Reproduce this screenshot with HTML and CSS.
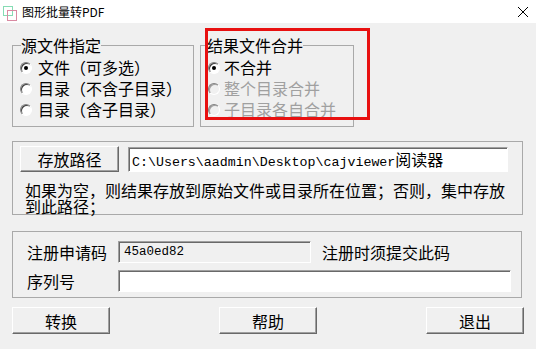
FILE: index.html
```html
<!DOCTYPE html>
<html>
<head>
    <meta charset="utf-8" />
    <title>图形批量转PDF</title>
    <link rel="stylesheet" href="styles.css">
</head>
<body>
    <div class="titlebar">
        <svg class="app-icon" width="16" height="16" viewBox="0 0 16 16">
            <rect x="1.5" y="1.5" width="9" height="9" fill="none" stroke="#86dcb4" stroke-width="1" />
            <rect x="5.5" y="5.5" width="9" height="10" fill="none" stroke="#d98aa2" stroke-width="1" />
        </svg>
        <span class="title">图形批量转PDF</span>
        <svg class="close" width="12" height="12" viewBox="0 0 12 12">
            <path d="M1 1 L11 11 M11 1 L1 11" stroke="#000" stroke-width="1" />
        </svg>
    </div>

    <div class="main">
        <div class="top-row">
            <fieldset class="group source">
                <legend>源文件指定</legend>
                <label class="opt"><input type="radio" name="src" checked> 文件（可多选）</label>
                <label class="opt"><input type="radio" name="src"> 目录（不含子目录）</label>
                <label class="opt"><input type="radio" name="src"> 目录（含子目录）</label>
            </fieldset>
            <fieldset class="group merge">
                <legend>结果文件合并</legend>
                <label class="opt"><input type="radio" name="merge" checked> 不合并</label>
                <label class="opt disabled"><input type="radio" name="merge" disabled> 整个目录合并</label>
                <label class="opt disabled"><input type="radio" name="merge" disabled> 子目录各自合并</label>
            </fieldset>
            <div class="highlight"></div>
        </div>

        <div class="group path-box">
            <div class="path-row">
                <button class="btn btn-path">存放路径</button>
                <div class="edit path-edit">C:\Users\aadmin\Desktop\cajviewer<span class="cjk">阅读器</span></div>
            </div>
            <p class="hint">如果为空，则结果存放到原始文件或目录所在位置；否则，集中存放<br>到此路径；</p>
        </div>

        <div class="group reg-box">
            <div class="reg-row">
                <span class="reg-label">注册申请码</span>
                <div class="edit code-edit">45a0ed82</div>
                <span class="reg-note">注册时须提交此码</span>
            </div>
            <div class="reg-row">
                <span class="reg-label">序列号</span>
                <div class="edit serial-edit"></div>
            </div>
        </div>

        <div class="actions">
            <button class="btn">转换</button>
            <button class="btn">帮助</button>
            <button class="btn">退出</button>
        </div>
    </div>
</body>
</html>
```

FILE: styles.css
```css
body {
	margin: 0;
	background: #f0f0f0;
	font-family: "Noto Sans CJK SC", "Liberation Sans", sans-serif;
	font-size: 16px;
	color: #000;
}

/***************************
	Title bar
***************************/
.titlebar {
	height: 23px;
	background: #fff;
	display: flex;
	align-items: center;
}

.app-icon {
	margin-left: 2px;
	margin-top: 2px;
}

.title {
	margin-left: 4px;
	font-size: 12px;
	line-height: 14px;
}

.close {
	margin-left: auto;
	margin-right: 7px;
}

/***************************
	Main panel
***************************/
.main {
	padding: 13px 12px 0 12px;
}

.top-row {
	display: flex;
	gap: 6px;
	position: relative;
}

.group {
	margin: 0;
	border: 1px solid #a9a9a9;
	box-sizing: border-box;
}

fieldset.group {
	padding: 3px 0 6px 7px;
}

.group legend {
	padding: 0;
	line-height: 18px;
}

.source {
	width: 182px;
}

.source legend {
	margin-left: 1px;
}

.merge {
	width: 154px;
}

.merge legend {
	margin-left: -1px;
}

.opt {
	display: flex;
	align-items: center;
	height: 21px;
	line-height: 21px;
	white-space: nowrap;
}

.opt input {
	appearance: none;
	-webkit-appearance: none;
	width: 12px;
	height: 12px;
	margin: 0 6px 0 0;
	border-radius: 50%;
	border: 1px solid;
	border-color: #808080 #fff #fff #808080;
	background: #fff;
	box-shadow: inset 1px 1px 0 #404040;
	position: relative;
	flex-shrink: 0;
}

.opt input:checked::after {
	content: "";
	position: absolute;
	left: 3px;
	top: 3px;
	width: 4px;
	height: 4px;
	border-radius: 50%;
	background: #000;
}

.merge .opt input {
	margin-right: 4px;
}

.opt.disabled {
	color: #a0a0a0;
}

.opt.disabled input {
	background: #f0f0f0;
	box-shadow: inset 1px 1px 0 #a0a0a0;
}

.highlight {
	position: absolute;
	left: 193px;
	top: -8px;
	width: 165px;
	height: 92px;
	border: 3px solid #e81010;
	box-sizing: border-box;
}

/***************************
	Path group
***************************/
.path-box {
	margin-top: 14px;
	width: 511px;
	padding: 4px 0 0 7px;
	height: 74px;
}

.path-row {
	display: flex;
	align-items: flex-start;
	gap: 9px;
}

.btn {
	font-family: inherit;
	font-size: 16px;
	background: #f0f0f0;
	border: 1px solid;
	border-color: #fff #696969 #696969 #fff;
	box-shadow: inset -1px -1px 0 #a0a0a0;
	padding: 0;
	width: 98px;
	height: 27px;
	line-height: 24px;
	color: #000;
}

.btn-path {
	width: 99px;
	height: 26px;
}

.edit {
	box-sizing: border-box;
	border: 1px solid;
	border-color: #a0a0a0 #fff #fff #a0a0a0;
	box-shadow: inset 1px 1px 0 #696969;
	background: #fff;
	white-space: nowrap;
	overflow: hidden;
}

.path-edit {
	margin-top: 1px;
	width: 380px;
	height: 25px;
	padding-left: 3px;
	font-family: "Liberation Mono", "Noto Sans CJK SC", monospace;
	font-size: 13.3px;
	line-height: 23px;
}

.cjk {
	font-family: "Noto Sans CJK SC", sans-serif;
	font-size: 16px;
}

.hint {
	margin: 10px 0 0 5px;
	line-height: 16px;
	white-space: nowrap;
}

/***************************
	Registration group
***************************/
.reg-box {
	margin-top: 16px;
	width: 510px;
	padding: 9px 0 5px 14px;
	display: flex;
	flex-direction: column;
	gap: 7px;
}

.reg-row {
	display: flex;
	align-items: center;
	height: 22px;
}

.reg-label {
	width: 91px;
	line-height: 22px;
}

.code-edit {
	width: 193px;
	height: 22px;
	background: #f0f0f0;
	padding-left: 5px;
	font-family: "Liberation Mono", monospace;
	font-size: 12.5px;
	line-height: 20px;
}

.reg-note {
	margin-left: 11px;
}

.serial-edit {
	width: 393px;
	height: 22px;
}

/***************************
	Bottom buttons
***************************/
.actions {
	margin-top: 9px;
	width: 512px;
	display: flex;
	justify-content: space-between;
}
```
